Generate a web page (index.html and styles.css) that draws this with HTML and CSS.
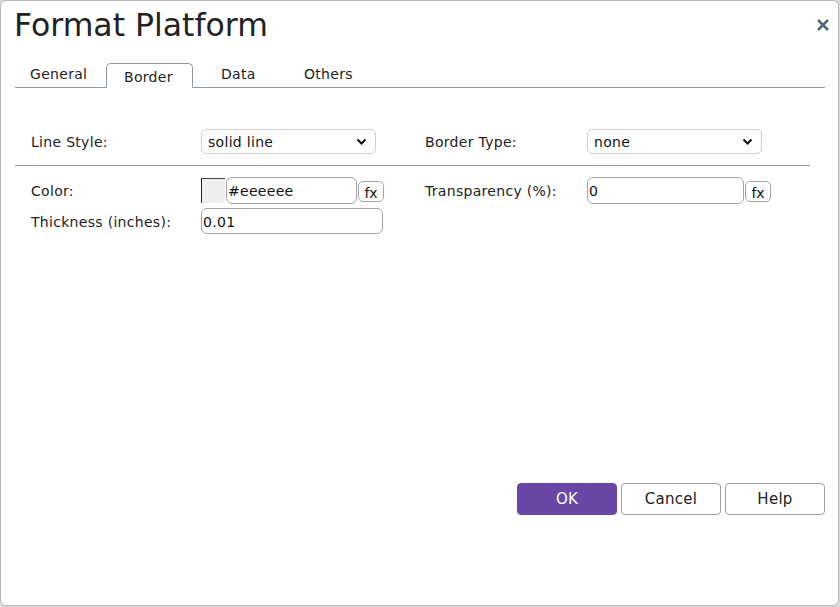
FILE: index.html
```html
<!DOCTYPE html>
<html lang="en">
<head>
  <meta charset="UTF-8">
  <title>Format Platform</title>
  <link rel="stylesheet" href="styles.css">
</head>
<body>
<div class="dialog">
  <div class="dialog-head">
    <h1 class="dialog-title">Format Platform</h1>
    <button class="close-btn" title="Close">
      <svg width="14" height="14" viewBox="0 0 14 14"><path d="M2 2 L12 12 M12 2 L2 12" stroke="#56677a" stroke-width="2.6" stroke-linecap="butt"/></svg>
    </button>
  </div>

  <div class="tabs">
    <span class="tab">General</span>
    <span class="tab active">Border</span>
    <span class="tab">Data</span>
    <span class="tab">Others</span>
  </div>

  <div class="panel">
    <div class="row">
      <div class="field left">
        <label>Line Style:</label>
        <div class="select">solid line
          <svg width="11" height="8" viewBox="0 0 11 8"><path d="M1.5 1.5 L5.5 5.5 L9.5 1.5" fill="none" stroke="#111" stroke-width="2"/></svg>
        </div>
      </div>
      <div class="field right">
        <label>Border Type:</label>
        <div class="select">none
          <svg width="11" height="8" viewBox="0 0 11 8"><path d="M1.5 1.5 L5.5 5.5 L9.5 1.5" fill="none" stroke="#111" stroke-width="2"/></svg>
        </div>
      </div>
    </div>

    <hr class="sep">

    <div class="row tight">
      <div class="field left">
        <label>Color:</label>
        <div class="inline">
          <span class="swatch"></span>
          <input class="input color-input" value="#eeeeee">
          <button class="fx">fx</button>
        </div>
      </div>
      <div class="field right">
        <label>Transparency (%):</label>
        <div class="inline">
          <input class="input trans-input" value="0">
          <button class="fx">fx</button>
        </div>
      </div>
    </div>
    <div class="row tight">
      <div class="field left">
        <label>Thickness (inches):</label>
        <input class="input thick-input" value="0.01">
      </div>
    </div>
  </div>

  <div class="actions">
    <button class="btn primary">OK</button>
    <button class="btn">Cancel</button>
    <button class="btn">Help</button>
  </div>
</div>
</body>
</html>
```

FILE: styles.css
```css
* {
  box-sizing: border-box;
}
body {
  margin: 0;
  background-color: #d9d9d9;
  font-family: "DejaVu Sans", "Open Sans", sans-serif;
  color: #222;
}
.dialog {
  width: 839px;
  height: 606px;
  background-color: #fff;
  border: 1px solid #b8b8b8;
  border-radius: 6px;
  padding: 0 13px 0 14px;
  display: flex;
  flex-direction: column;
}
.dialog-head {
  display: flex;
  justify-content: space-between;
  align-items: flex-start;
  height: 62px;
}
.dialog-title {
  margin: 5px 0 0 -1px;
  font-size: 31.5px;
  font-weight: 400;
  color: #222;
  line-height: 38px;
}
.close-btn {
  border: none;
  background: none;
  padding: 0;
  margin: 17px -5px 0 0;
  cursor: pointer;
}
.tabs {
  display: flex;
  align-items: flex-end;
  border-bottom: 1px solid #8e969e;
  height: 25px;
  margin-right: 0;
}
.tab {
  font-size: 14px;
  letter-spacing: 0.3px;
  padding: 0 0 3px 15px;
  color: #222;
  line-height: 20px;
}
.tab:first-child {
  width: 91px;
}
.tab.active {
  width: 87px;
  height: 25px;
  margin-bottom: -1px;
  border: 1px solid #8e969e;
  border-bottom-color: #fff;
  border-radius: 5px 5px 0 0;
  padding: 3px 0 0 17px;
  background-color: #fff;
}
.tab:nth-child(3) {
  width: 96px;
  padding-left: 28px;
}
.panel {
  flex: 1;
  padding: 41px 16px 0 16px;
}
.row {
  display: flex;
  align-items: center;
}
.row.tight {
  margin-bottom: 4px;
}
.field {
  display: flex;
  align-items: center;
}
.field.left {
  width: 394px;
}
.field.left label {
  width: 170px;
}
.field.right label {
  width: 162px;
}
label {
  font-size: 14px;
  letter-spacing: 0.3px;
  color: #222;
  padding-top: 1px;
}
.select {
  width: 175px;
  height: 25px;
  border: 1px solid #cfcfcf;
  border-radius: 5px;
  font-size: 14px;
  letter-spacing: 0.3px;
  padding: 0 8px 0 6px;
  display: flex;
  align-items: center;
  justify-content: space-between;
  color: #111;
}
.sep {
  border: none;
  border-top: 1px solid #9a9a9a;
  margin: 11px -1px 11px -16px;
}
.inline {
  display: flex;
  align-items: center;
}
.swatch {
  width: 24px;
  height: 25px;
  background-color: #eeeeee;
  border-left: 1px solid #222;
  border-top: 1px solid #444;
  margin-right: 1px;
}
.input {
  height: 27px;
  border: 1px solid #a4a4a4;
  border-radius: 6px;
  font-family: inherit;
  font-size: 14px;
  letter-spacing: 0.3px;
  color: #111;
  padding: 1px 1px 0 1px;
  outline: none;
}
.color-input {
  width: 131px;
}
.trans-input {
  width: 157px;
}
.thick-input {
  width: 182px;
  height: 26px;
}
.fx {
  height: 21px;
  width: 26px;
  margin-left: 1px;
  margin-top: 2px;
  border: 1px solid #a4a4a4;
  border-radius: 5px;
  background-color: #fff;
  font-family: inherit;
  font-size: 14px;
  padding: 2px 0 0 0;
  line-height: 18px;
  color: #111;
}
.actions {
  display: flex;
  justify-content: flex-end;
  gap: 4px;
  padding: 0 0 90px 0;
}
.btn {
  width: 100px;
  height: 32px;
  border: 1px solid #9aa0a6;
  border-radius: 4px;
  background-color: #fff;
  font-family: inherit;
  font-size: 15px;
  letter-spacing: 0.3px;
  color: #222;
  cursor: pointer;
}
.btn.primary {
  background-color: #6a47a6;
  border-color: #6a47a6;
  color: #fff;
}
```
